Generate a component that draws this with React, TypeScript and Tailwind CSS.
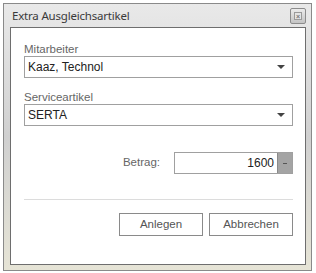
import React from 'react'

function Arrow() {
  return (
    <svg width="8" height="4" viewBox="0 0 8 4" className="block">
      <path d="M0 0 L8 0 L4 4 Z" fill="#444" />
    </svg>
  )
}

function Select({ value }: { value: string }) {
  return (
    <div className="flex items-center h-[22px] border border-[#a0a0a0] bg-white pl-[3px] pr-[7px]">
      <span className="flex-1 text-[12px] text-[#222]">{value}</span>
      <Arrow />
    </div>
  )
}

export default function App() {
  return (
    <div
      className="w-[316px] h-[273px] bg-white pt-[3px] pl-[3px] pr-[4px] pb-[2px]"
      style={{ fontFamily: '"Liberation Sans", Arial, sans-serif' }}
    >
      <div className="h-full flex flex-col border border-[#8a8a8a] bg-gradient-to-b from-[#e9e9e9] via-[#d0d0d0] to-[#e6e4d6] pl-[6px] pr-[5px] pb-[5px]">
        <div className="h-[23px] flex items-center justify-between pl-[2px]">
          <span
            className="text-[11.5px] text-[#3a3a3a]"
            style={{ fontFamily: '"Noto Sans", "Open Sans", sans-serif', letterSpacing: '-0.2px' }}
          >
            Extra Ausgleichsartikel
          </span>
          <div className="w-[16px] h-[16px] border border-[#8c8c8c] rounded-[2px] bg-gradient-to-b from-[#ececec] to-[#c4c4c4] flex items-center justify-center mt-[1px]">
            <div className="w-[8px] h-[8px] border border-[#9a9a9a] bg-[#e4e4e4] flex items-center justify-center">
              <span className="text-[7px] leading-none text-[#777] font-bold">×</span>
            </div>
          </div>
        </div>
        <div className="flex-1 border border-[#6e6e6e] bg-white pl-[13px] pr-[12px] pt-[14px]">
          <div className="text-[11.5px] leading-[14px] text-[#666]">Mitarbeiter</div>
          <Select value="Kaaz, Technol" />
          <div className="text-[11.5px] leading-[14px] text-[#666] mt-[12px]">Serviceartikel</div>
          <Select value="SERTA" />

          <div className="flex items-center justify-end mt-[26px]">
            <span className="text-[11.5px] text-[#666] mr-[14px]">Betrag:</span>
            <div className="flex h-[22px] w-[119px] border border-[#a0a0a0] bg-white">
              <span className="flex-1 text-right text-[12px] text-[#222] pr-[3px] leading-[20px]">1600</span>
              <div className="w-[15px] bg-[#a4a4a4] border-l border-[#8a8a8a] flex items-center justify-center">
                <span className="block w-[4px] h-[1px] bg-[#555]" />
              </div>
            </div>
          </div>

          <div className="h-[1px] bg-[#dcdcdc] mt-[25px]" />

          <div className="flex justify-end gap-[6px] mt-[13px]">
            <button className="w-[84px] h-[23px] border border-[#8a8a8a] bg-white text-[11.5px] text-[#555]">
              Anlegen
            </button>
            <button className="w-[84px] h-[23px] border border-[#8a8a8a] bg-white text-[11.5px] text-[#555]">
              Abbrechen
            </button>
          </div>
        </div>
      </div>
    </div>
  )
}
